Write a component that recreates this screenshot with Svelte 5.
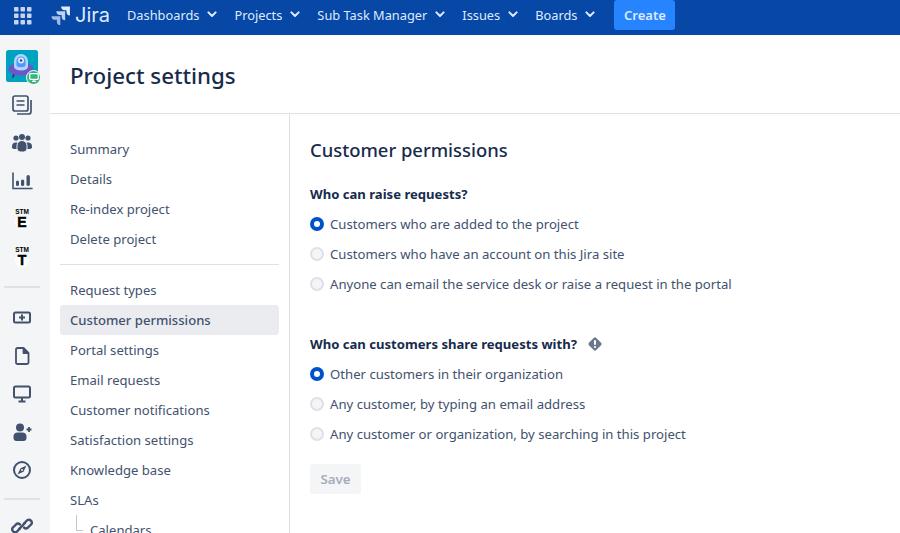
<script>
  const topNav = ['Dashboards', 'Projects', 'Sub Task Manager', 'Issues', 'Boards'];
  const navTop = ['Summary', 'Details', 'Re-index project', 'Delete project'];
  const navBottom = ['Request types', 'Customer permissions', 'Portal settings', 'Email requests', 'Customer notifications', 'Satisfaction settings', 'Knowledge base', 'SLAs'];
  const raise = ['Customers who are added to the project', 'Customers who have an account on this Jira site', 'Anyone can email the service desk or raise a request in the portal'];
  const share = ['Other customers in their organization', 'Any customer, by typing an email address', 'Any customer or organization, by searching in this project'];
</script>

<div class="page">
  <header class="topbar">
    <svg class="apps" width="18" height="18" viewBox="0 0 18 18" fill="#c5d5f0">
      {#each [0, 6.5, 13] as y}
        {#each [0, 6.5, 13] as x}
          <rect x={x} y={y} width="4.5" height="4.5" rx="0.8" />
        {/each}
      {/each}
    </svg>
    <div class="logo">
      <svg width="20" height="19" viewBox="3 0.5 17 17" fill="#deebff">
        <path d="M19.5 1H11.6a3.3 3.3 0 0 0 3.3 3.3h1.5v1.4a3.3 3.3 0 0 0 3.1 3.3z" />
        <path d="M15.2 5.3H7.3a3.3 3.3 0 0 0 3.3 3.3h1.5V10a3.3 3.3 0 0 0 3.1 3.3z" opacity="0.85" />
        <path d="M10.9 9.6H3a3.3 3.3 0 0 0 3.3 3.3h1.5v1.4a3.3 3.3 0 0 0 3.1 3.3z" opacity="0.7" />
      </svg>
      <span>Jira</span>
    </div>
    <nav class="topnav">
      {#each topNav as item}
        <span class="topitem">{item}
          <svg width="10" height="7" viewBox="0 0 10 7"><path d="M1.4 1.4 5 5l3.6-3.6" fill="none" stroke="#deebff" stroke-width="2" stroke-linecap="round" stroke-linejoin="round" /></svg>
        </span>
      {/each}
    </nav>
    <button class="create">Create</button>
  </header>

  <div class="body">
    <aside class="rail">
      <div class="avatar">
        <svg width="32" height="32" viewBox="0 0 32 32">
          <rect width="32" height="32" rx="2.5" fill="#00a3bf" />
          <path d="M8 24l-1 3M22 24l1 3" stroke="#403294" stroke-width="2" stroke-linecap="round" />
          <ellipse cx="15" cy="19" rx="12.5" ry="6.5" fill="#6f55c9" />
          <path d="M8 17V11a7 7 0 0 1 14 0v6a7 3.500 0 0 1-14 0z" fill="#b3d4ff" />
          <path d="M10.500 15V11a4.500 4.500 0 0 1 9 0v4a4.500 2.200 0 0 1-9 0z" fill="#4c9aff" />
          <circle cx="15" cy="10.500" r="3" fill="#deebff" />
          <circle cx="15" cy="10.500" r="1.300" fill="#42526e" />
        </svg>
        <span class="badge">
          <svg width="10" height="9" viewBox="0 0 10 9"><rect x="0.7" y="0.7" width="8.6" height="5.6" rx="0.8" fill="none" stroke="#fff" stroke-width="1.3" /><path d="M3 8.4h4M5 6.500v2" stroke="#fff" stroke-width="1.1" /></svg>
        </span>
      </div>

      <div class="railicons first">
        <svg width="22" height="22" viewBox="0 0 22 22" fill="none" stroke="#42526e" stroke-width="1.7">
          <rect x="2" y="2" width="15" height="15" rx="2" />
          <path d="M5.5 7h8M5.5 11h8" />
          <path d="M20 6v11.5a2.5 2.5 0 0 1-2.5 2.5H6" />
        </svg>
        <svg width="22" height="22" viewBox="0 0 22 22" fill="#42526e">
          <circle cx="5" cy="6" r="2.6" /><circle cx="17" cy="6" r="2.6" /><circle cx="11" cy="5" r="3" />
          <path d="M1 14.5a4 4 0 0 1 4-4h1.5V17H3a2 2 0 0 1-2-2.500zM21 14.5a4 4 0 0 0-4-4h-1.5V17H19a2 2 0 0 0 2-2.500z" />
          <path d="M6 13.500a5 5 0 0 1 10 0v3a3.500 3.500 0 0 1-3.500 3.500h-3A3.500 3.500 0 0 1 6 16.500z" stroke="#f4f5f7" />
        </svg>
        <svg width="22" height="22" viewBox="0 0 22 22" fill="#42526e">
          <path d="M2 3v15.500h19" fill="none" stroke="#42526e" stroke-width="1.6" stroke-linecap="round" />
          <rect x="5" y="10.500" width="3" height="5.500" rx="1.500" />
          <rect x="10" y="9.500" width="3.200" height="6.500" rx="1.600" />
          <rect x="15.500" y="5" width="3.400" height="11" rx="1.700" />
        </svg>
        <div class="stm"><small>STM</small><b>E</b></div>
        <div class="stm"><small>STM</small><b>T</b></div>
      </div>

      <hr class="rule-one" />

      <div class="railicons second">
        <svg width="20" height="20" viewBox="0 0 20 20" fill="none" stroke="#42526e" stroke-width="2">
          <rect x="2" y="4.500" width="16" height="10" rx="1.500" />
          <path d="M10 6.500v6M7 9.500h6" />
        </svg>
        <svg width="20" height="20" viewBox="0 0 20 20" fill="none" stroke="#42526e" stroke-width="1.8" stroke-linejoin="round">
          <path d="M4 3.500A1.500 1.500 0 0 1 5.500 2h6L16.500 7v9.500a1.500 1.500 0 0 1-1.500 1.500H5.500A1.500 1.500 0 0 1 4 16.500z" />
          <path d="M11.500 2v5h5" fill="#42526e" />
        </svg>
        <svg width="20" height="20" viewBox="0 0 20 20" fill="none" stroke="#42526e" stroke-width="2">
          <rect x="2" y="2.500" width="16" height="11" rx="1.500" />
          <path d="M10 14v3M6.500 17.500h7" />
        </svg>
        <svg width="20" height="20" viewBox="0 0 20 20" fill="#42526e">
          <circle cx="8" cy="5.500" r="4" />
          <path d="M1.500 14a4 4 0 0 1 4-3.500h5a4 4 0 0 1 4 3.500v2a3 3 0 0 1-3 3h-7a3 3 0 0 1-3-3z" />
          <path d="M14.500 7.500h5M17 5v5" fill="none" stroke="#42526e" stroke-width="1.8" />
        </svg>
        <svg width="20" height="20" viewBox="0 0 20 20">
          <circle cx="10" cy="10" r="8" fill="none" stroke="#42526e" stroke-width="2" />
          <path d="M14.500 5.500l-6 2.700L5.500 14.500l6-2.700z" fill="#42526e" />
          <circle cx="10" cy="10" r="1" fill="#f4f5f7" />
        </svg>
      </div>

      <hr class="rule-two" />

      <svg class="link" width="22" height="22" viewBox="0 0 22 22" fill="none" stroke="#42526e" stroke-width="2.4" stroke-linecap="round">
        <path d="M9 13.500l-3.500 3.500a3 3 0 0 1-4-4L5 9.500a3 3 0 0 1 4 0" />
        <path d="M13 8.500L16.500 5a3 3 0 0 1 4 4L17 12.500a3 3 0 0 1-4 0" />
        <path d="M8 14l6-6" />
      </svg>
    </aside>

    <div class="content">
      <h1>Project settings</h1>
      <div class="columns">
        <nav class="sidenav">
          {#each navTop as item}
            <div class="navitem">{item}</div>
          {/each}
          <div class="divider"></div>
          {#each navBottom as item}
            <div class="navitem" class:active={item === 'Customer permissions'}>{item}</div>
          {/each}
          <div class="navitem sub"><span class="elbow"></span>Calendars</div>
        </nav>

        <main class="form">
          <h2>Customer permissions</h2>

          <h3>Who can raise requests?</h3>
          {#each raise as label, i}
            <div class="radio"><span class="dot" class:on={i === 0}></span>{label}</div>
          {/each}

          <h3 class="second">Who can customers share requests with?
            <svg width="16" height="16" viewBox="0 0 16 16">
              <rect x="2.8" y="2.8" width="10.400" height="10.400" rx="1.8" transform="rotate(45 8 8)" fill="#6b778c" />
              <rect x="7" y="4" width="2" height="5" rx="1" fill="#fff" />
              <circle cx="8" cy="11" r="1.1" fill="#fff" />
            </svg>
          </h3>
          {#each share as label, i}
            <div class="radio"><span class="dot" class:on={i === 0}></span>{label}</div>
          {/each}

          <button class="save" disabled>Save</button>
        </main>
      </div>
    </div>
  </div>
</div>

<style>
  :global(body) {
    margin: 0;
    font-family: "Noto Sans", "Open Sans", sans-serif;
    color: #172b4d;
    background: #fff;
  }

  .page {
    width: 900px;
    height: 533px;
    overflow: hidden;
    display: flex;
    flex-direction: column;
  }

  .topbar {
    height: 35px;
    flex: none;
    background: #0747a6;
    display: flex;
    align-items: center;
    padding-left: 14px;
  }

  .apps {
    margin-top: -3px;
  }

  .logo {
    display: flex;
    align-items: center;
    margin-left: 19px;
    gap: 4px;
    color: #deebff;
    font-family: Inter, sans-serif;
    font-size: 20px;
    font-weight: 400;
    margin-top: -5px;
  }

  .topnav {
    display: flex;
    margin-left: 17px;
    gap: 17px;
    margin-top: -6px;
  }

  .topitem {
    color: #deebff;
    font-size: 12.8px;
    display: flex;
    align-items: center;
    gap: 8px;
  }

  .create {
    margin-left: 19px;
    width: 61px;
    height: 30px;
    margin-top: -5px;
    border: none;
    border-radius: 3px;
    background: #2684ff;
    color: #deebff;
    font: 600 13px "Noto Sans", sans-serif;
  }

  .body {
    flex: 1;
    min-height: 0;
    display: flex;
  }

  .rail {
    width: 50px;
    flex: none;
    box-sizing: border-box;
    padding: 15px 6px 0 0;
    background: #f4f5f7;
    display: flex;
    flex-direction: column;
    align-items: center;
  }

  .avatar {
    position: relative;
    width: 32px;
    height: 32px;
  }

  .avatar > svg {
    display: block;
  }

  .badge {
    position: absolute;
    right: -3px;
    bottom: -3px;
    width: 13px;
    height: 13px;
    border-radius: 50%;
    background: #36b37e;
    border: 1.5px solid #fff;
    display: flex;
    align-items: center;
    justify-content: center;
  }

  .railicons {
    display: flex;
    flex-direction: column;
    align-items: center;
  }

  .railicons.first {
    margin-top: 12px;
    gap: 16px;
  }

  .railicons.second {
    gap: 18px;
  }

  .railicons svg {
    display: block;
  }

  .stm {
    width: 22px;
    height: 22px;
    display: flex;
    flex-direction: column;
    align-items: center;
    gap: 1px;
    color: #000;
    line-height: 1;
  }

  .stm small {
    font: 700 6.5px/7px "Liberation Sans", sans-serif;
  }

  .stm b {
    width: 14px;
    height: 13px;
    text-align: center;
    border-radius: 50%;
    background: #fff;
    font: 900 14px/13px "Liberation Sans", sans-serif;
    -webkit-text-stroke: 0.5px #000;
  }

  .rail hr {
    width: 36px;
    height: 2px;
    flex: none;
    border: none;
    background: #dfe1e6;
  }

  .rule-one {
    margin: 18px 0 20px;
  }

  .rule-two {
    margin: 18px 0 15px;
  }

  .link {
    flex: none;
  }

  .content {
    flex: 1;
    min-width: 0;
    display: flex;
    flex-direction: column;
  }

  h1 {
    height: 79px;
    flex: none;
    box-sizing: border-box;
    margin: 0;
    padding: 0 0 0 20px;
    line-height: 82px;
    font-size: 22.3px;
    font-weight: 500;
    border-bottom: 1px solid #dfe1e6;
  }

  .columns {
    flex: 1;
    min-height: 0;
    display: flex;
  }

  .sidenav {
    width: 240px;
    flex: none;
    box-sizing: border-box;
    border-right: 1px solid #dfe1e6;
    padding: 20px 10px 0;
    overflow: hidden;
  }

  .navitem {
    height: 30px;
    line-height: 30px;
    padding-left: 10px;
    border-radius: 3px;
    font-size: 13.1px;
    color: #42526e;
    white-space: nowrap;
  }

  .navitem.active {
    background: #ebecf0;
    font-weight: 500;
  }

  .sub {
    position: relative;
    padding-left: 30px;
  }

  .elbow {
    position: absolute;
    left: 16px;
    top: 0;
    width: 6px;
    height: 15px;
    border-left: 1px solid #c1c7d0;
    border-bottom: 1px solid #c1c7d0;
  }

  .divider {
    height: 1px;
    background: #dfe1e6;
    margin: 10px 0;
  }

  .form {
    flex: 1;
    padding: 22px 0 0 20px;
  }

  h2 {
    margin: 0;
    font-size: 18.4px;
    font-weight: 500;
    line-height: 28px;
  }

  h3 {
    margin: 20px 0 0;
    font-size: 13.1px;
    font-weight: 700;
    line-height: 20px;
    height: 20px;
    display: flex;
    align-items: center;
    gap: 10px;
  }

  h3 + .radio {
    margin-top: 5px;
  }

  h3.second {
    margin-top: 35px;
  }

  .radio {
    height: 30px;
    display: flex;
    align-items: center;
    gap: 6px;
    font-size: 13.15px;
    color: #42526e;
    white-space: nowrap;
  }

  .dot {
    width: 14px;
    height: 14px;
    box-sizing: border-box;
    border-radius: 50%;
    background: #f4f5f7;
    border: 2px solid #dfe1e6;
  }

  .dot.on {
    background: #fff;
    border: 4.5px solid #0052cc;
  }

  .save {
    display: block;
    margin-top: 15px;
    width: 51px;
    height: 30px;
    border: none;
    border-radius: 3px;
    background: #f4f5f7;
    color: #a5adba;
    font: 600 13.3px "Noto Sans", sans-serif;
  }
</style>
